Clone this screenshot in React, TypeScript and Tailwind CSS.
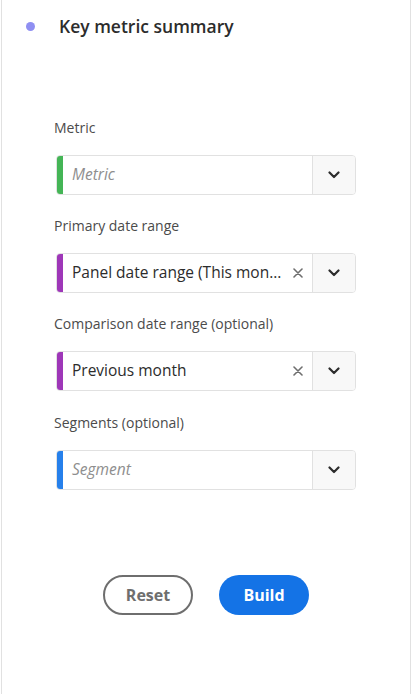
import React from "react";

function Chevron() {
  return (
    <svg width="12" height="8" viewBox="0 0 12 8" fill="none">
      <path d="M1.5 1.5 L6 6 L10.5 1.5" stroke="#2c2c2c" strokeWidth="2.2" strokeLinecap="round" strokeLinejoin="round" />
    </svg>
  );
}

function Clear() {
  return (
    <svg width="10" height="10" viewBox="0 0 10 10" fill="none">
      <path d="M1 1 L9 9 M9 1 L1 9" stroke="#6e6e6e" strokeWidth="1.6" strokeLinecap="round" />
    </svg>
  );
}

function Field({
  color,
  text,
  placeholder,
  clearable,
}: {
  color: string;
  text: string;
  placeholder?: boolean;
  clearable?: boolean;
}) {
  return (
    <div className="ml-[2px] flex h-[40px] w-[300px] overflow-hidden rounded-[4px] border border-[#e1e1e1] bg-white">
      <div className="w-[6px] shrink-0" style={{ backgroundColor: color }} />
      <div className="flex min-w-0 flex-1 items-center pl-[9px] pr-[8px]">
        <span
          className={
            placeholder
              ? "whitespace-nowrap text-[15.5px] italic text-[#8e8e8e]"
              : "whitespace-nowrap text-[15.5px] text-[#2c2c2c]"
          }
        >
          {text}
        </span>
        {clearable ? (
          <span className="ml-auto flex items-center pr-[1px]">
            <Clear />
          </span>
        ) : null}
      </div>
      <div className="flex w-[43px] shrink-0 items-center justify-center border-l border-[#e1e1e1] bg-[#f8f8f8]">
        <Chevron />
      </div>
    </div>
  );
}

function Label({ children, mt }: { children: React.ReactNode; mt: string }) {
  return (
    <div className={`${mt} h-[20px] text-[14px] leading-[20px] text-[#4b4b4b]`}>{children}</div>
  );
}

export default function App() {
  return (
    <div
      className="ml-[1px] min-h-[694px] w-[410px] border-x border-[#e1e1e1] bg-white"
      style={{ fontFamily: '"Open Sans", "Noto Sans", sans-serif' }}
    >
      <div className="flex h-[52px] items-center pl-[24px]">
        <div className="h-[9px] w-[9px] rounded-full bg-[#8f8ff2]" />
        <div className="ml-[24px] text-[17.5px] font-semibold text-[#2c2c2c]">Key metric summary</div>
      </div>
      <div className="pl-[52px]">
        <Label mt="mt-[66px]">Metric</Label>
        <div className="mt-[17px]">
          <Field color="#44b556" text="Metric" placeholder />
        </div>
        <Label mt="mt-[21px]">Primary date range</Label>
        <div className="mt-[17px]">
          <Field color="#9e37b8" text="Panel date range (This mon..." clearable />
        </div>
        <Label mt="mt-[21px]">Comparison date range (optional)</Label>
        <div className="mt-[17px]">
          <Field color="#9e37b8" text="Previous month" clearable />
        </div>
        <Label mt="mt-[22px]">Segments (optional)</Label>
        <div className="mt-[17px]">
          <Field color="#2680eb" text="Segment" placeholder />
        </div>
      </div>
      <div className="mt-[85px] flex justify-center gap-[26px]">
        <button className="flex h-[40px] w-[90px] items-center justify-center rounded-full border-2 border-[#6e6e6e] bg-white text-[16px] font-bold text-[#6e6e6e]">
          Reset
        </button>
        <button className="flex h-[40px] w-[90px] items-center justify-center rounded-full bg-[#1473e6] text-[16px] font-bold text-white">
          Build
        </button>
      </div>
    </div>
  );
}
